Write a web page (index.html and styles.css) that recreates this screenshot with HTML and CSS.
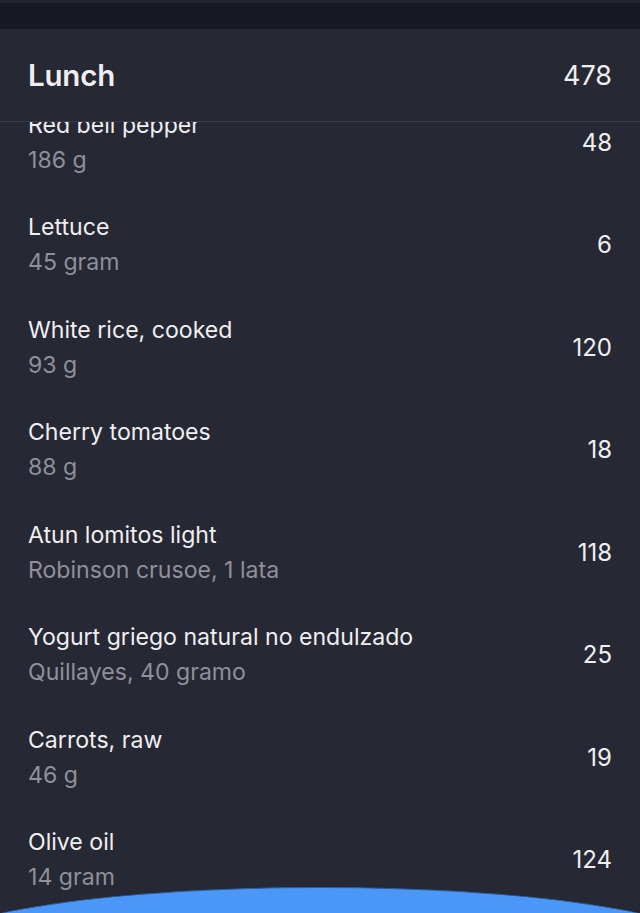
FILE: index.html
```html
<!DOCTYPE html>
<html lang="en">
<head>
    <meta charset="UTF-8">
    <title>Lunch</title>
    <link rel="stylesheet" href="styles.css">
</head>
<body class="page">
<div class="topbar"></div>
<div class="meal">
    <div class="meal-head">
        <div class="meal-title">Lunch</div>
        <div class="meal-kcal">478</div>
    </div>
    <div class="list">
        <div class="rows">
            <div class="row">
                <div class="info">
                    <div class="name">Red bell pepper</div>
                    <div class="amount">186 g</div>
                </div>
                <div class="kcal">48</div>
            </div>
            <div class="row">
                <div class="info">
                    <div class="name">Lettuce</div>
                    <div class="amount">45 gram</div>
                </div>
                <div class="kcal">6</div>
            </div>
            <div class="row">
                <div class="info">
                    <div class="name">White rice, cooked</div>
                    <div class="amount">93 g</div>
                </div>
                <div class="kcal">120</div>
            </div>
            <div class="row">
                <div class="info">
                    <div class="name">Cherry tomatoes</div>
                    <div class="amount">88 g</div>
                </div>
                <div class="kcal">18</div>
            </div>
            <div class="row">
                <div class="info">
                    <div class="name">Atun lomitos light</div>
                    <div class="amount">Robinson crusoe, 1 lata</div>
                </div>
                <div class="kcal">118</div>
            </div>
            <div class="row">
                <div class="info">
                    <div class="name">Yogurt griego natural no endulzado</div>
                    <div class="amount">Quillayes, 40 gramo</div>
                </div>
                <div class="kcal">25</div>
            </div>
            <div class="row">
                <div class="info">
                    <div class="name">Carrots, raw</div>
                    <div class="amount">46 g</div>
                </div>
                <div class="kcal">19</div>
            </div>
            <div class="row">
                <div class="info">
                    <div class="name">Olive oil</div>
                    <div class="amount">14 gram</div>
                </div>
                <div class="kcal">124</div>
            </div>
        </div>
        <div class="add-arc"></div>
    </div>
</div>
</body>
</html>
```

FILE: styles.css
```css
html, body {
    height: 100%;
}

.page {
    margin: 0;
    background: #262833;
    font-family: Inter, "Liberation Sans", sans-serif;
    color: #eeeef0;
    overflow: hidden;
    display: flex;
    flex-direction: column;
}

.topbar {
    height: 26px;
    background: #161923;
    border-top: 3px solid #22252f;
    flex: none;
}

.meal {
    flex: 1;
    display: flex;
    flex-direction: column;
    min-height: 0;
}

.meal-head {
    height: 92px;
    display: flex;
    align-items: center;
    justify-content: space-between;
    padding: 0 28px;
    border-bottom: 1px solid #3a3c47;
    flex: none;
}

.meal-title {
    font-size: 29.5px;
    font-weight: 600;
    letter-spacing: -0.2px;
}

.meal-kcal {
    font-size: 27px;
    font-weight: 400;
}

.list {
    flex: 1;
    position: relative;
    overflow: hidden;
}

.rows {
    margin-top: -31px;
}

.row {
    height: 102.5px;
    display: flex;
    align-items: center;
    justify-content: space-between;
    padding: 0 28px;
}

.info {
    display: flex;
    flex-direction: column;
    gap: 9px;
}

.name {
    font-size: 23.1px;
    line-height: 26px;
    color: #efeff2;
}

.amount {
    font-size: 23.1px;
    line-height: 26px;
    color: #8f9099;
}

.kcal {
    font-size: 24px;
    color: #efeff2;
}

.add-arc {
    position: absolute;
    left: -80px;
    right: -80px;
    top: 765px;
    height: 130px;
    border-radius: 50%;
    background: #4a97f8;
    border-top: 1px solid #2e5d9a;
}
```
